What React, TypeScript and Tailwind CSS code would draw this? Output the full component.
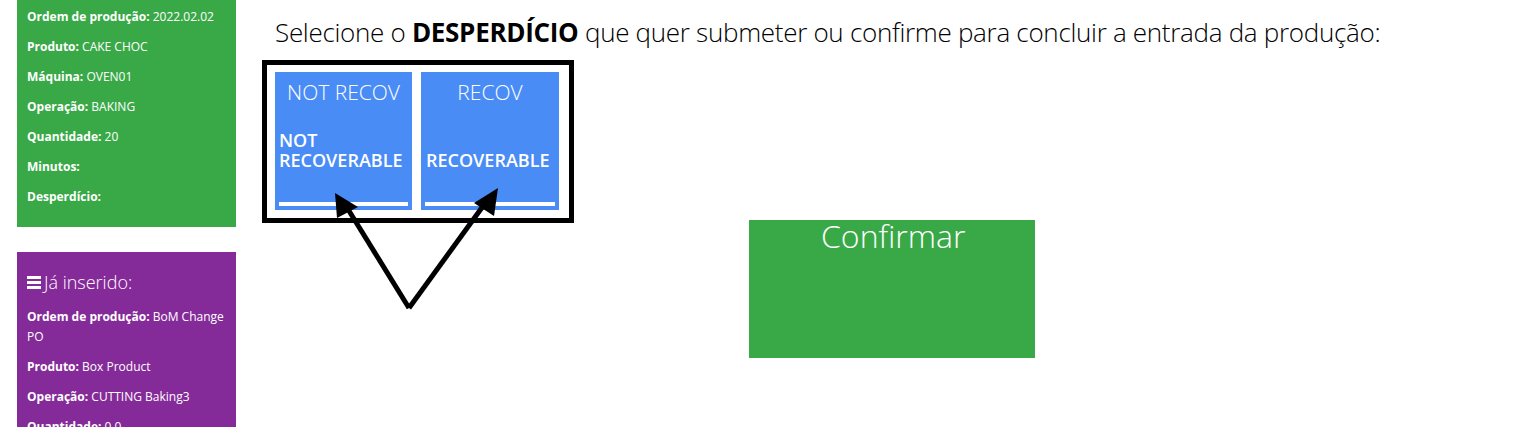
import React from "react";

const font = { fontFamily: '"Open Sans", "Noto Sans", sans-serif' };

function Row({ label, value }: { label: string; value?: string }) {
  return (
    <p className="mb-[10px] text-[12px] leading-[20px] text-white">
      <b className="font-bold">{label}</b> {value}
    </p>
  );
}

function Card({ title, lines, pl }: { title: string; lines: string[]; pl: string }) {
  return (
    <div className="flex h-[138px] flex-col bg-[#4a8cf6] text-white">
      <div className="pt-[9px] text-center text-[21px] font-light leading-[22px]">{title}</div>
      <div className={`flex flex-1 flex-col justify-end pb-[32px] text-[18px] font-semibold leading-[20px] ${pl}`}>
        {lines.map((l) => (
          <div key={l} className="whitespace-nowrap">{l}</div>
        ))}
      </div>
      <div className="mx-[4px] mb-[4px] h-[4px] bg-white" />
    </div>
  );
}

export default function App() {
  return (
    <div className="relative h-[427px] w-[1538px] overflow-hidden bg-white" style={font}>
      <div className="flex">
        <div className="ml-[17px] flex w-[219px] shrink-0 flex-col">
          <div className="bg-[#39a948] pb-[10px] pl-[10px] pr-[10px] pt-[7px]">
            <Row label="Ordem de produção:" value="2022.02.02" />
            <Row label="Produto:" value="CAKE CHOC" />
            <Row label="Máquina:" value="OVEN01" />
            <Row label="Operação:" value="BAKING" />
            <Row label="Quantidade:" value="20" />
            <Row label="Minutos:" />
            <Row label="Desperdício:" />
          </div>
          <div className="mt-[25px] bg-[#852b99] px-[10px] pt-[10px] pb-[10px]">
            <div className="mb-[15px] mt-[10px] flex items-center text-[18px] font-light leading-[20px] text-white">
              <svg width="14" height="13" viewBox="0 0 14 13" className="mr-[3px]">
                <rect x="0" y="0" width="14" height="3" fill="white" />
                <rect x="0" y="5" width="14" height="3" fill="white" />
                <rect x="0" y="10" width="14" height="3" fill="white" />
              </svg>
              <span>Já inserido:</span>
            </div>
            <Row label="Ordem de produção:" value="BoM Change PO" />
            <Row label="Produto:" value="Box Product" />
            <Row label="Operação:" value="CUTTING Baking3" />
            <Row label="Quantidade:" value="0.0" />
          </div>
        </div>
        <div className="ml-[26px] flex flex-col items-start">
          <h1 className="ml-[13px] mt-[18px] whitespace-nowrap text-[26px] font-light leading-[29px] tracking-[-0.3px] text-black">
            Selecione o <b className="font-bold">DESPERDÍCIO</b> que quer submeter ou confirme para concluir a entrada da produção:
          </h1>
          <div className="mt-[13px] flex gap-[9px] border-[5px] border-black pb-[8px] pl-[8px] pr-[10px] pt-[7px]">
            <div className="w-[137px]">
              <Card title="NOT RECOV" lines={["NOT", "RECOVERABLE"]} pl="pl-[4px]" />
            </div>
            <div className="w-[138px]">
              <Card title="RECOV" lines={["RECOVERABLE"]} pl="pl-[5px]" />
            </div>
          </div>
          <div className="-mt-[3px] ml-[487px] h-[138px] w-[286px] bg-[#39a948] pl-[72px] text-[32px] font-light leading-[32px] text-white">
            Confirmar
          </div>
        </div>
      </div>
      <svg className="pointer-events-none absolute left-0 top-0" width="1538" height="427">
        <line x1="409" y1="308" x2="346" y2="206" stroke="black" strokeWidth="5" />
        <line x1="409" y1="308" x2="486" y2="202" stroke="black" strokeWidth="5" />
        <polygon points="335,193 337,218 358,207" fill="black" />
        <polygon points="498,188 474,203 494,216" fill="black" />
      </svg>
    </div>
  );
}
